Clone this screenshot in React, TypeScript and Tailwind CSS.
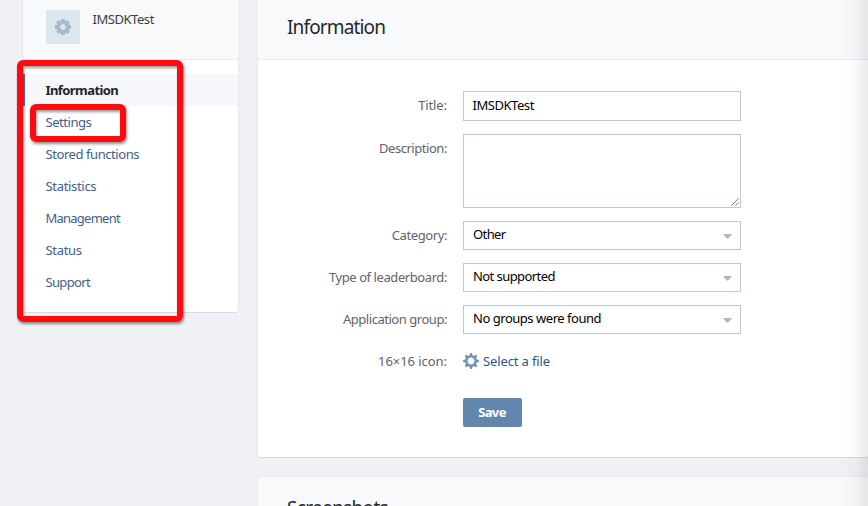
import type { ReactNode } from 'react';

const navItems = [
  { label: 'Information', spacing: 'tracking-[-0.58px]' },
  { label: 'Settings', spacing: 'tracking-[-0.45px]' },
  { label: 'Stored functions', spacing: 'tracking-[-0.43px]' },
  { label: 'Statistics', spacing: 'tracking-[-0.32px]' },
  { label: 'Management', spacing: 'tracking-[-0.76px]' },
  { label: 'Status', spacing: 'tracking-[-0.3px]' },
  { label: 'Support', spacing: 'tracking-[-0.65px]' },
];

function FileGear() {
  return (
    <svg width="16" height="16" viewBox="-8 -8 16 16" className="block shrink-0">
      <g fill="#7191b6">
        {[0, 45, 90, 135, 180, 225, 270, 315].map((a) => (
          <path key={a} d="M-1.7 -5 L-0.9 -7.9 H0.9 L1.7 -5 Z" transform={`rotate(${a})`} />
        ))}
      </g>
      <circle r="4.7" fill="none" stroke="#7191b6" strokeWidth="2.4" />
    </svg>
  );
}

function ProfileGear() {
  return (
    <svg width="16" height="16" viewBox="-8 -8 16 16" className="block">
      <g fill="#a8b9cb">
        {[0, 45, 90, 135, 180, 225, 270, 315].map((a) => (
          <rect key={a} x="-2" y="-8" width="4" height="4" rx="0.8" transform={`rotate(${a})`} />
        ))}
      </g>
      <circle r="4.7" fill="none" stroke="#a8b9cb" strokeWidth="3.6" />
    </svg>
  );
}

function Row({ label, spacing, className, children }: { label: string; spacing: string; className: string; children: ReactNode }) {
  return (
    <div className={`flex ${className}`}>
      <div className={`mr-4 w-[189px] pt-[5px] text-right leading-[18px] text-[#626467] ${spacing}`}>{label}</div>
      {children}
    </div>
  );
}

function Select({ value, spacing }: { value: string; spacing: string }) {
  return (
    <div className="flex h-[29px] w-[278px] items-start justify-between border border-[#c0c8d2] pr-2 pl-[9px] text-black">
      <span className={`pt-[3px] leading-[18px] ${spacing}`}>{value}</span>
      <svg width="9" height="5" viewBox="0 0 9 5" className="mt-[12px]">
        <path d="M0 0H9L5.3 4.5H3.7Z" fill="#b3b7bd" />
      </svg>
    </div>
  );
}

export default function App() {
  return (
    <div className="relative flex h-[506px] w-[868px] gap-[20px] overflow-hidden bg-[#f0f1f5] pl-[23px] font-['Noto_Sans',sans-serif] text-[13px]">
      <aside className="h-[312px] w-[215px] shrink-0 rounded-b-[2px] bg-white shadow-[0_1px_0_0_#d7dae0,0_0_0_1px_#e4e7ec]">
        <div className="flex h-[60px] border-b border-[#e8ebef] bg-[#f7f9fb] pt-[10px] pl-[23px]">
          <div className="flex h-[34px] w-[34px] items-center justify-center bg-[#dde5ed]">
            <ProfileGear />
          </div>
          <span className="ml-[12.5px] leading-[18px] tracking-[-0.45px] text-[#3c3d3f]">IMSDKTest</span>
        </div>
        <nav className="pt-[14px] text-[#426089]">
          {navItems.map(({ label, spacing }, i) => (
            <div
              key={label}
              className={
                i === 0
                  ? `flex h-8 items-center border-l-2 border-[#5b7ba3] bg-[#f5f7fa] pt-[2px] pl-[20.5px] font-bold text-[#222428] ${spacing}`
                  : `flex h-8 items-center pt-[2px] pl-[22.5px] ${spacing}`
              }
            >
              {label}
            </div>
          ))}
        </nav>
      </aside>

      <main className="flex w-[610px] shrink-0 flex-col gap-[20px]">
        <section className="h-[457px] shrink-0 rounded-b-[2px] bg-white shadow-[0_1px_0_0_#d7dae0,0_0_0_1px_#e4e7ec]">
          <h1 className="h-[60px] border-b border-[#e8ebef] bg-[#f7f9fb] pt-[14px] pl-[29px] text-[19px] leading-[26px] tracking-[-0.85px] text-[#26282c]">
            Information
          </h1>
          <form className="pt-[31px]">
            <Row label="Title:" spacing="tracking-[-0.1px]" className="h-[43px]">
              <div className="h-[30px] w-[278px] border border-[#c0c8d2] pt-1 pl-[8.5px] leading-[18px] tracking-[-0.45px] text-black">IMSDKTest</div>
            </Row>
            <Row label="Description:" spacing="tracking-[-0.45px]" className="h-[87px]">
              <div className="flex h-[74px] w-[278px] items-end justify-end border border-[#c0c8d2] p-px">
                <svg width="8" height="8" viewBox="0 0 8 8" stroke="#6b6b6b" strokeWidth="0.9">
                  <path d="M0.5 7.5L7.5 0.5M4.5 7.5L7.5 4.5" />
                </svg>
              </div>
            </Row>
            <Row label="Category:" spacing="tracking-[-0.4px]" className="h-[42px]">
              <Select value="Other" spacing="tracking-[-0.6px]" />
            </Row>
            <Row label="Type of leaderboard:" spacing="tracking-[-0.42px]" className="h-[42px]">
              <Select value="Not supported" spacing="tracking-[-0.57px]" />
            </Row>
            <Row label="Application group:" spacing="tracking-[-0.46px]" className="h-[42px]">
              <Select value="No groups were found" spacing="tracking-[-0.47px]" />
            </Row>
            <Row label="16×16 icon:" spacing="tracking-[-0.05px]" className="h-[51px]">
              <div className="flex h-7 items-center text-[#2f5584]">
                <FileGear />
                <span className="ml-1 pt-[2px] tracking-[-0.13px]">Select a file</span>
              </div>
            </Row>
            <div className="ml-[205px] flex h-[29px] w-[59px] items-center justify-center rounded-[2px] bg-[#6287ae] pr-px font-bold tracking-[-0.65px] text-white">
              Save
            </div>
          </form>
        </section>
        <section className="h-[80px] shrink-0 bg-[#f7f9fb] pt-[18px] pl-[29px] text-[19px] leading-[26px] tracking-[-0.68px] text-[#26282c] shadow-[0_0_0_1px_#eaecf0]">
          Screenshots
        </section>
      </main>

      <div className="pointer-events-none absolute inset-y-0 right-0 w-[28px] bg-linear-to-r from-black/0 via-black/2 to-black/8" />
      <div className="absolute top-[60px] left-[17px] h-[262px] w-[166px] rounded-[6px] border-6 border-[#fe0b12] shadow-[1px_2px_3px_rgba(0,0,0,0.45),inset_1px_2px_3px_rgba(0,0,0,0.4)]" />
      <div className="absolute top-[104px] left-[30px] h-[38px] w-[96px] rounded-[6px] border-6 border-[#fe0b12] shadow-[1px_2px_3px_rgba(0,0,0,0.45),inset_1px_2px_3px_rgba(0,0,0,0.4)]" />
    </div>
  );
}
